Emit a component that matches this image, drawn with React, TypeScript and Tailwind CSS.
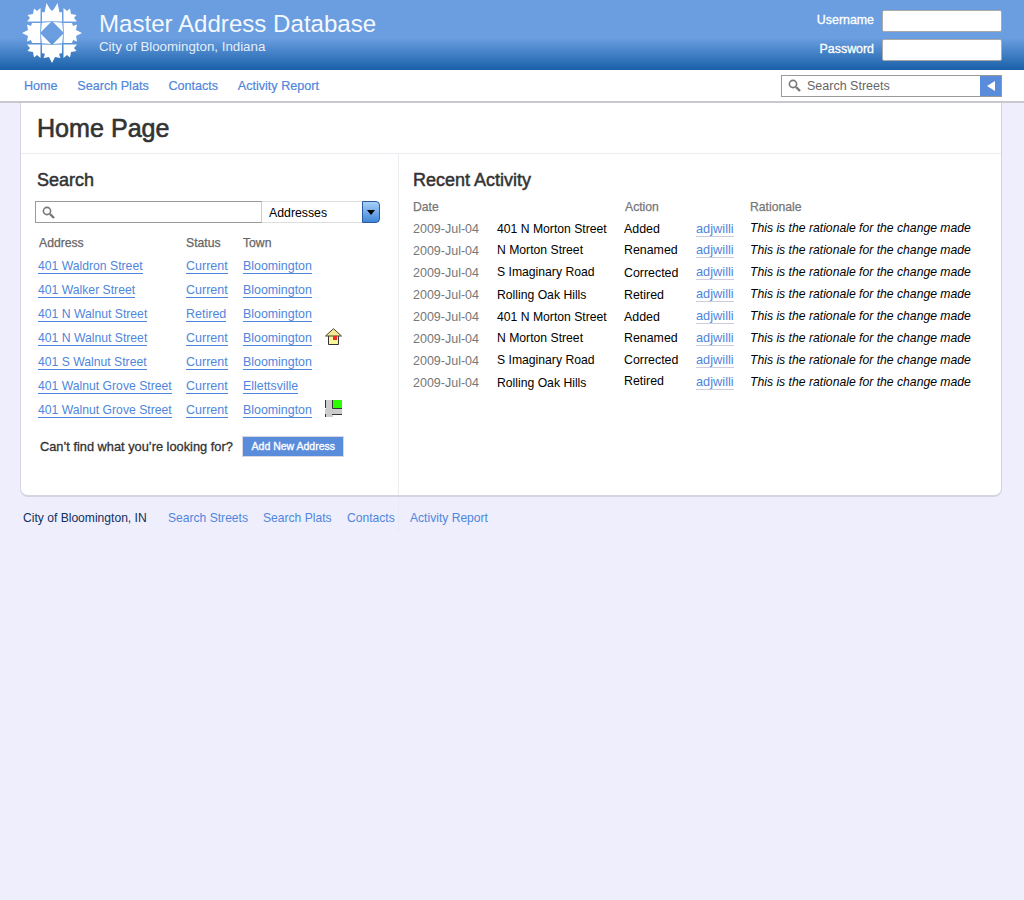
const font = "font-['Liberation_Sans',Arial,sans-serif]";

const addresses = [
  ["401 Waldron Street", "Current", "Bloomington", ""],
  ["401 Walker Street", "Current", "Bloomington", ""],
  ["401 N Walnut Street", "Retired", "Bloomington", ""],
  ["401 N Walnut Street", "Current", "Bloomington", "house"],
  ["401 S Walnut Street", "Current", "Bloomington", ""],
  ["401 Walnut Grove Street", "Current", "Ellettsville", ""],
  ["401 Walnut Grove Street", "Current", "Bloomington", "map"],
];

const up = "-mt-px";
const none = "";
const activity = [
  { name: "401 N Morton Street", action: "Added", n: none, a: none, u: none },
  { name: "N Morton Street", action: "Renamed", n: up, a: up, u: up },
  { name: "S Imaginary Road", action: "Corrected", n: up, a: none, u: up },
  { name: "Rolling Oak Hills", action: "Retired", n: none, a: none, u: up },
  { name: "401 N Morton Street", action: "Added", n: none, a: none, u: up },
  { name: "N Morton Street", action: "Renamed", n: up, a: up, u: up },
  { name: "S Imaginary Road", action: "Corrected", n: up, a: up, u: up },
  { name: "Rolling Oak Hills", action: "Retired", n: none, a: "-mt-[2px]", u: up },
];

function Logo() {
  const arm = "M-10 -21 L-7.5 -20.5 L-5.5 -30 L-2 -24 L0 -22 L2 -24 L5.5 -30 L7.5 -20.5 L10 -21 V-11.5 L0 -11.8 L-10 -11.5 Z";
  const side = "M-10 -20 L-7 -21 L-8.5 -25 L-3 -24 L0 -30 L3 -24 L8.5 -25 L7 -21 L10 -20 V-11.5 L0 -11.8 L-10 -11.5 Z";
  const corner = "M-11.5 -11.5 V-25 L-15 -22 L-18 -24.5 L-19 -19 L-24.5 -18 L-22 -15 L-25 -11.5 Z";
  const wedge = "M-10.2 -10.2 L-1 -11 L-11 -1 Z";
  return (
    <svg width="62" height="62" viewBox="-31 -31 62 62" className="shrink-0" fill="#fff">
      <path d={arm} />
      {[90, 180, 270].map((r) => (
        <path key={r} d={side} transform={`rotate(${r})`} />
      ))}
      {[0, 90, 180, 270].map((r) => (
        <path key={r} d={corner} transform={`rotate(${r})`} />
      ))}
      {[0, 90, 180, 270].map((r) => (
        <path key={r} d={wedge} transform={`rotate(${r})`} />
      ))}
    </svg>
  );
}

function Mag({ className }: { className?: string }) {
  return (
    <svg width="13" height="13" viewBox="0 0 13 13" className={className} fill="none" stroke="#777">
      <circle cx="5" cy="5" r="3.6" strokeWidth="1.6" />
      <path d="M8 8 L12 12" strokeWidth="2.4" />
    </svg>
  );
}

function House() {
  return (
    <svg width="17" height="17" viewBox="0 0 17 17" className="shrink-0">
      <path d="M3.5 7.5 H13.5 V16.5 H3.5 Z" fill="#fdf59a" stroke="#333" />
      <path d="M0.5 8 L8.5 0.7 L16.5 8 Z" fill="#f5ea90" stroke="#443" />
      <rect x="8" y="8" width="4" height="4" fill="#ee2c2c" />
    </svg>
  );
}

function MapIcon() {
  return (
    <svg width="17" height="17" viewBox="0 0 17 17" className="shrink-0">
      <rect x="1" y="0" width="7" height="17" fill="#ccc" />
      <rect x="0" y="9" width="17" height="5" fill="#ccc" />
      <rect x="8" y="0" width="9" height="8" fill="#2dfb00" />
      <path d="M7.5 0 V8.5 H17" fill="none" stroke="#333" />
      <path d="M0.5 0 V8" fill="none" stroke="#333" />
      <path d="M7 14.5 H17" fill="none" stroke="#333" />
      <path d="M0.5 14 V17" fill="none" stroke="#333" />
    </svg>
  );
}

export default function App() {
  const link = "text-[#4f86dc] border-b border-[#4f86dc] leading-[14px] inline-block";
  return (
    <div className={`${font} min-h-[900px] bg-[#eeeefd] text-[12.4px] text-black`}>
      <header className="h-[70px] flex justify-between bg-[linear-gradient(to_bottom,#6a9ee0_0px,#6a9ee0_38px,#1a60a8_70px)] pl-[21px] pr-[22px]">
        <div className="flex items-start pt-[2px]">
          <Logo />
          <div className="ml-[16px] pt-[7px]">
            <div className="text-[24.1px] leading-[30px] text-[#f4f8fd]">Master Address Database</div>
            <div className="text-[13.3px] leading-[15px] text-[#e6eefa]">City of Bloomington, Indiana</div>
          </div>
        </div>
        <div className="flex flex-col gap-[7px] pt-[10px]">
          {["Username", "Password"].map((l) => (
            <label key={l} className="flex items-center justify-end gap-[8px] text-white text-[12.4px] [-webkit-text-stroke:0.3px]">
              <span className="-mt-[1px]">{l}</span>
              <span className="block w-[120px] h-[22px] bg-white border border-[#aaa] rounded-[2px]" />
            </label>
          ))}
        </div>
      </header>

      <nav className="h-[33px] bg-white border-b-2 border-[#c8c8ce] flex items-center justify-between pl-[24px] pr-[22px]">
        <div className="flex gap-[19.7px] pt-[1px] text-[12.6px] text-[#4f86dc] [-webkit-text-stroke:0.2px]">
          <a>Home</a>
          <a>Search Plats</a>
          <a>Contacts</a>
          <a>Activity Report</a>
        </div>
        <div className="flex h-[22px] w-[221px] border border-[#999]">
          <div className="flex-1 flex items-center gap-[6px] pl-[6px] text-[#666] text-[12.5px]">
            <Mag />
            <span className="pt-[1px]">Search Streets</span>
          </div>
          <div className="w-[21px] bg-[#5a8cdc] flex items-center justify-center">
            <div className="w-0 h-0 border-y-[5px] border-y-transparent border-r-[8px] border-r-white" />
          </div>
        </div>
      </nav>

      <main className="mx-[20px] w-[982px] h-[394px] bg-white border border-t-0 border-[#d5d5e0] border-b-2 rounded-b-[8px] flex flex-col">
        <h1 className="h-[51px] shrink-0 border-b border-[#ececf0] pl-[16px] pt-[9px] text-[25.1px] leading-[32px] font-normal text-[#333] [-webkit-text-stroke:0.6px]">Home Page</h1>
        <div className="flex flex-1">
          <section className="w-[378px] shrink-0 border-r border-[#ececf0] pl-[14px] pt-[14px]">
            <h2 className="pl-[2px] text-[18px] leading-[24px] font-normal text-[#333] [-webkit-text-stroke:0.5px]">Search</h2>
            <div className="mt-[9px] flex h-[22px] w-[345px]">
              <div className="w-[227px] border border-[#999] border-r-[#ccc] flex items-center pl-[6px]">
                <Mag />
              </div>
              <div className="flex-1 border-y border-[#ddd] flex items-center pl-[7px] pt-[2px] text-[12.3px]">Addresses</div>
              <div className="w-[18px] bg-[linear-gradient(to_bottom,#a8d0f8,#3f86d8)] border border-[#2a5aa0] rounded-r-[4px] flex items-center justify-center">
                <div className="w-0 h-0 border-x-[4px] border-x-transparent border-t-[5px] border-t-black" />
              </div>
            </div>
            <div className="mt-[11px] grid grid-cols-[148px_57px_1fr] pl-[3px] text-[#666] text-[12.2px] h-[16px] [-webkit-text-stroke:0.25px]">
              <span className="pl-[1px]">Address</span>
              <span>Status</span>
              <span>Town</span>
            </div>
            <div className="mt-[7px] flex flex-col">
              {addresses.map((r, i) => (
                <div key={i} className="grid grid-cols-[148px_57px_82px_20px] pl-[3px] h-[24px] items-start">
                  <span><a className={`${link} text-[12.2px]`}>{r[0]}</a></span>
                  <span><a className={`${link} text-[12.5px]`}>{r[1]}</a></span>
                  <span><a className={`${link} text-[12.4px]`}>{r[2]}</a></span>
                  <span className="-mt-[1px]">{r[3] === "house" ? <House /> : r[3] === "map" ? <MapIcon /> : null}</span>
                </div>
              ))}
            </div>
            <div className="mt-[11px] flex items-center pl-[5px] h-[21px]">
              <span className="text-[#333] text-[12.8px] [-webkit-text-stroke:0.3px]">Can’t find what you’re looking for?</span>
              <span className="ml-[9.5px] w-[102px] h-[21px] bg-[#5a8cdc] border border-[#d8d8e4] text-white text-[10.5px] [-webkit-text-stroke:0.3px] flex items-center justify-center">Add New Address</span>
            </div>
          </section>
          <section className="flex-1 pl-[14px] pt-[14px]">
            <h2 className="text-[18px] leading-[24px] font-normal text-[#333] [-webkit-text-stroke:0.5px]">Recent Activity</h2>
            <div className="mt-[6px] grid grid-cols-[84px_127px_72px_54px_1fr] text-[#777] text-[12.2px] h-[20px] [-webkit-text-stroke:0.25px]">
              <span>Date</span>
              <span />
              <span className="pl-[1px]">Action</span>
              <span />
              <span>Rationale</span>
            </div>
            <div className="flex flex-col mt-[2px]">
              {activity.map((r, i) => (
                <div key={i} className="grid grid-cols-[84px_127px_72px_54px_1fr] h-[22px] items-start">
                  <span className="text-[#777] text-[12.5px]">2009-Jul-04</span>
                  <span className={`${r.n} text-[12.2px]`}>{r.name}</span>
                  <span className={r.a}>{r.action}</span>
                  <span className={r.u}><a className="text-[#4f86dc] border-b border-[#ccd] leading-[14px] inline-block text-[12.8px]">adjwilli</a></span>
                  <span className="-mt-px italic text-[12.2px]">This is the rationale for the change made</span>
                </div>
              ))}
            </div>
          </section>
        </div>
      </main>

      <footer className="relative flex pl-[23px] pt-[13px] text-[12.1px] leading-[16px]">
        <div className="absolute left-[398px] top-0 w-px h-[34px] bg-[#e8e8f7]" />
        <span className="text-[#10305f] w-[145px]">City of Bloomington, IN</span>
        <a className="text-[#4f86dc] w-[95px]">Search Streets</a>
        <a className="text-[#4f86dc] w-[84px]">Search Plats</a>
        <a className="text-[#4f86dc] w-[63px]">Contacts</a>
        <a className="text-[#4f86dc]">Activity Report</a>
      </footer>
    </div>
  );
}
